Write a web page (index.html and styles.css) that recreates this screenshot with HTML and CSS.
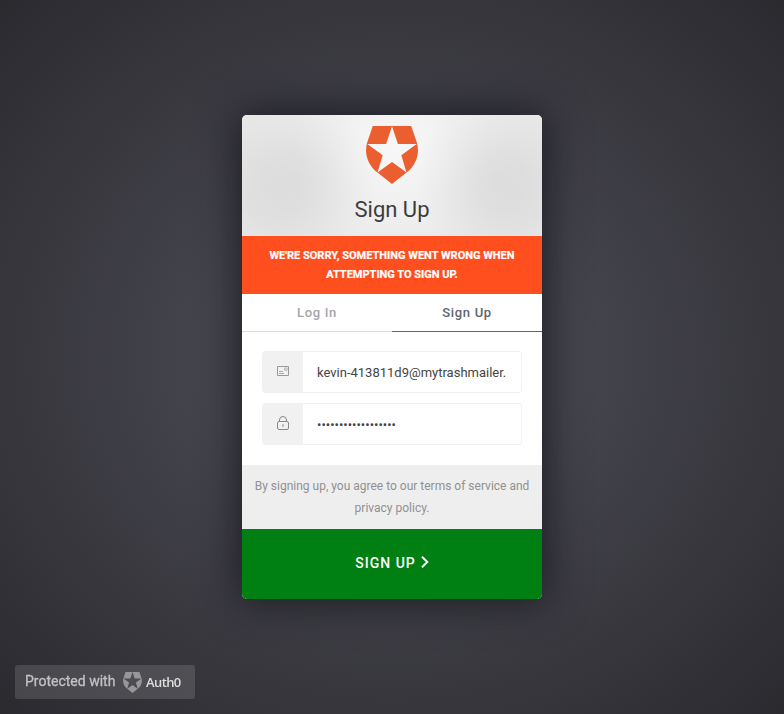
FILE: index.html
```html
<!DOCTYPE html>
<html lang="en">
<head>
<meta charset="utf-8">
<title>Sign Up</title>
<link rel="stylesheet" href="styles.css">
</head>
<body>
<main class="card">
  <header class="header">
    <svg class="logo" viewBox="0 0 52 58"><path fill="#eb5e2f" fill-rule="evenodd" d="M6.8 0H45.2L51 17C54 28 50 39.5 40.5 46.6L26 58L11.5 46.6C2 39.5-2 28 1 17ZM26 .3L20.1 18H1.3L16.7 29.2L11.5 46.6L26 36L40.5 46.6L35.3 29.2L50.7 18H31.9Z"/></svg>
    <h1 class="title">Sign Up</h1>
  </header>
  <div class="error">We're sorry, something went wrong when<br>attempting to sign up.</div>
  <nav class="tabs">
    <a class="tab">Log In</a>
    <a class="tab tab-current">Sign Up</a>
  </nav>
  <form class="fields">
    <div class="field">
      <span class="field-icon">
        <svg width="12" height="10" viewBox="0 0 12 10" fill="none" stroke="#999"><path d="M.5.5h11v9H.5z"/><path d="M2 5.5h4M2 7.5h5" stroke="#aaa"/><path d="M7.5 2h2.6v2.3H7.5z" stroke-width=".8" stroke="#aaa"/></svg>
      </span>
      <div class="value"><span class="value-text">kevin-413811d9@mytrashmailer.</span></div>
    </div>
    <div class="field">
      <span class="field-icon">
        <svg width="12" height="14" viewBox="0 0 12 14" fill="none" stroke="#888"><rect x=".5" y="5.5" width="11" height="8" rx="1.5"/><path d="M2.5 5.5V4a3.5 3.5 0 0 1 7 0v1.5"/><path d="M6 8v3" stroke-width="1.4" stroke="#aaa"/></svg>
      </span>
      <div class="value"><span class="value-text">••••••••••••••••••</span></div>
    </div>
  </form>
  <div class="terms">By signing up, you agree to our terms of service and<br>privacy policy.</div>
  <button class="submit"><span>Sign Up</span><svg width="8" height="12" viewBox="0 0 8 12" fill="none" stroke="#fff" stroke-width="1.9"><path d="M1 .8l5.3 5.2L1 11.2"/></svg></button>
</main>
<footer class="badge">
  <span class="badge-label">Protected with</span>
  <svg class="badge-logo" viewBox="0 0 52 58"><path fill="#97979b" fill-rule="evenodd" d="M6.8 0H45.2L51 17C54 28 50 39.5 40.5 46.6L26 58L11.5 46.6C2 39.5-2 28 1 17ZM26 .3L20.1 18H1.3L16.7 29.2L11.5 46.6L26 36L40.5 46.6L35.3 29.2L50.7 18H31.9Z"/></svg>
  <span class="badge-name">Auth0</span>
</footer>
</body>
</html>
```
FILE: styles.css
```css
* { box-sizing: border-box; }
body {
  margin: 0;
  height: 714px;
  overflow: hidden;
  display: flex;
  align-items: center;
  justify-content: center;
  font-family: Roboto, sans-serif;
  background: radial-gradient(#52525c, #2b2a2f);
}
.card {
  width: 300px;
  height: 484px;
  border-radius: 5px;
  overflow: hidden;
  background: #fff;
  box-shadow: 0 0 40px 4px #1c1c22;
}
.header {
  height: 121px;
  padding-top: 11px;
  text-align: center;
  background:
    radial-gradient(ellipse 85px 85px at 50px 65px, rgba(0,0,0,.07), rgba(0,0,0,.06) 30%, rgba(0,0,0,.02) 75%, transparent),
    radial-gradient(ellipse 85px 85px at 257px 65px, rgba(0,0,0,.07), rgba(0,0,0,.06) 30%, rgba(0,0,0,.02) 75%, transparent),
    radial-gradient(ellipse 170px 120px at 155px 35px, #f7f7f7, #e8e8e8);
}
.logo { display: block; width: 52px; height: 58px; margin: 0 auto 12px; }
.title { margin: 0; font-size: 22px; line-height: 28px; font-weight: 400; color: #3c3c3c; }
.error {
  height: 58px;
  padding-top: 10px;
  background: #ff4f1f;
  color: #fff;
  font-size: 11px;
  font-weight: 700;
  line-height: 19px;
  -webkit-text-stroke: .2px #fff;
  text-align: center;
  text-transform: uppercase;
}
.tabs { display: flex; height: 38px; }
.tab {
  flex: 1;
  border-bottom: 1px solid #ddd;
  color: #a3a6ac;
  font-size: 13px;
  font-weight: 500;
  line-height: 38px;
  letter-spacing: .7px;
  text-align: center;
}
.tab-current { color: #5c666f; border-color: #5c666f; }
.fields { display: grid; gap: 10px; height: 133px; padding: 19px 20px 20px; margin: 0; grid-auto-rows: 42px; }
.field { display: flex; border: 1px solid #f1f1f1; border-radius: 3px; overflow: hidden; }
.field-icon { display: flex; align-items: center; justify-content: center; width: 40px; background: #f1f1f1; padding-bottom: 2px; }
.value { flex: 1; min-width: 0; padding: 0 14px; font-size: 13px; line-height: 42px; color: #444; }
.value-text { display: block; white-space: nowrap; }
.terms { height: 64px; padding-top: 10px; background: #eee; color: #919191; font-size: 12px; line-height: 22px; text-align: center; }
.submit {
  display: flex;
  align-items: center;
  justify-content: center;
  gap: 5px;
  width: 100%;
  height: 70px;
  padding: 0 0 4px;
  border: 0;
  background: #008012;
  color: #fff;
  font: 500 14px/20px Roboto, sans-serif;
  letter-spacing: 1px;
  text-transform: uppercase;
}
.submit span { padding-top: 2px; }
.badge {
  position: fixed;
  left: 15px;
  bottom: 15px;
  display: flex;
  align-items: center;
  width: 180px;
  height: 34px;
  padding-left: 10px;
  border-radius: 3px;
  background: rgba(255,255,255,.13);
}
.badge-label { width: 98px; padding-bottom: 2px; font-size: 14px; color: #c2c2c4; white-space: nowrap; -webkit-text-stroke: .3px #c2c2c4; }
.badge-logo { width: 19px; height: 21px; margin-right: 4px; }
.badge-name { padding-bottom: 1px; font: 600 13px/20px "Open Sans", sans-serif; letter-spacing: -.6px; color: #dededf; }
```
